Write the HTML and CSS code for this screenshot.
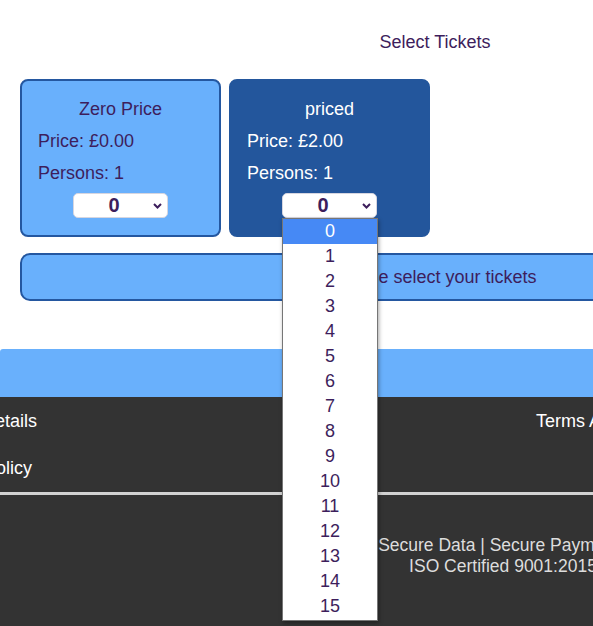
FILE: index.html
```html
<!DOCTYPE html>
<html lang="en">
<head>
<meta charset="utf-8">
<title>Select Tickets</title>
<link rel="stylesheet" href="styles.css">
</head>
<body>
<div class="page">
  <div class="heading">Select Tickets</div>
  <div class="cards">
    <div class="card card-light">
      <div class="card-title">Zero Price</div>
      <div class="card-line">Price: £0.00</div>
      <div class="card-line">Persons: 1</div>
      <div class="select">
        <span class="select-value">0</span>
        <svg class="chev" width="9" height="6" viewBox="0 0 9 6"><polyline points="1,1 4.5,4.5 8,1" fill="none" stroke="#3d1e5c" stroke-width="2"/></svg>
      </div>
    </div>
    <div class="card card-dark">
      <div class="card-title">priced</div>
      <div class="card-line">Price: £2.00</div>
      <div class="card-line">Persons: 1</div>
      <div class="select">
        <span class="select-value">0</span>
        <svg class="chev" width="9" height="6" viewBox="0 0 9 6"><polyline points="1,1 4.5,4.5 8,1" fill="none" stroke="#3d1e5c" stroke-width="2"/></svg>
        <ul class="dropdown">
          <li class="opt opt-active">0</li>
          <li class="opt">1</li>
          <li class="opt">2</li>
          <li class="opt">3</li>
          <li class="opt">4</li>
          <li class="opt">5</li>
          <li class="opt">6</li>
          <li class="opt">7</li>
          <li class="opt">8</li>
          <li class="opt">9</li>
          <li class="opt">10</li>
          <li class="opt">11</li>
          <li class="opt">12</li>
          <li class="opt">13</li>
          <li class="opt">14</li>
          <li class="opt">15</li>
        </ul>
      </div>
    </div>
  </div>
  <div class="message">Please select your tickets</div>
  <div class="band"></div>
  <footer class="footer">
    <div class="links">
      <div class="col col-left">
        <span>Contact Details</span>
        <span>Privacy Policy</span>
      </div>
      <div class="col"></div>
      <div class="col col-right">
        <span>Terms And Conditions</span>
      </div>
    </div>
    <div class="rule"></div>
    <div class="secure">
      <div>Secure Data | Secure Payments</div>
      <div>ISO Certified 9001:2015</div>
    </div>
  </footer>
</div>
</body>
</html>
```

FILE: styles.css
```css
html, body {
  margin: 0;
  padding: 0;
}
body {
  width: 593px;
  height: 626px;
  overflow: hidden;
  background: #ffffff;
  font-family: "Liberation Sans", Arial, sans-serif;
  font-size: 18px;
  color: #3d1e5c;
}
.page {
  width: 870px;
  display: flex;
  flex-direction: column;
}
.heading {
  text-align: center;
  line-height: 21px;
  padding-top: 32px;
}
.cards {
  display: flex;
  gap: 8px;
  padding-left: 20px;
  margin-top: 26px;
}
.card {
  box-sizing: border-box;
  width: 201px;
  height: 158px;
  border: 2px solid #2457a0;
  border-radius: 8px;
  padding-top: 12px;
  display: flex;
  flex-direction: column;
}
.card-light {
  background: #69b0fc;
  color: #3d1e5c;
}
.card-dark {
  background: #23569c;
  border-color: #23569c;
  color: #ffffff;
}
.card-title {
  text-align: center;
  line-height: 32px;
}
.card-line {
  line-height: 32px;
  padding-left: 16px;
}
.select {
  position: relative;
  box-sizing: border-box;
  width: 95px;
  height: 25px;
  margin: 4px auto 0;
  background: #ffffff;
  border: 1px solid #d6d6e0;
  border-radius: 5px;
  display: flex;
  align-items: center;
  color: #3d1e5c;
}
.select-value {
  flex: 1;
  text-align: center;
  font-weight: bold;
  font-size: 20px;
  padding-left: 4px;
}
.chev {
  margin-right: 5px;
  margin-left: 3px;
}
.dropdown {
  position: absolute;
  top: 24px;
  left: -1px;
  width: 96px;
  box-sizing: border-box;
  margin: 0;
  padding: 0;
  list-style: none;
  background: #ffffff;
  border: 1px solid #767676;
  box-shadow: 1px 2px 4px rgba(0, 0, 0, 0.35);
  z-index: 10;
}
.opt {
  height: 25px;
  line-height: 25px;
  text-align: center;
  font-size: 18px;
  color: #3d1e5c;
}
.opt:last-child {
  height: 26px;
}
.opt-active {
  background: #4689f5;
  color: #ffffff;
}
.message {
  box-sizing: border-box;
  margin: 16px 20px 0;
  height: 48px;
  line-height: 44px;
  text-align: center;
  background: #69b0fc;
  border: 2px solid #2457a0;
  border-radius: 10px;
}
.band {
  margin-top: 48px;
  height: 48px;
  background: #69b0fc;
  border-top-left-radius: 3px;
}
.footer {
  margin-left: -130px;
  width: 1130px;
  height: 240px;
  background: #333333;
  color: #ffffff;
}
.links {
  display: grid;
  grid-template-columns: 212px 454px 1fr;
  padding-top: 14px;
}
.col {
  display: flex;
  flex-direction: column;
  gap: 26px;
  line-height: 21px;
}
.col-left {
  align-items: center;
}
.rule {
  margin-top: 13px;
  height: 3px;
  background: #d2d2d2;
}
.secure {
  margin-top: 40px;
  margin-left: 397px;
  width: 472px;
  text-align: center;
  line-height: 21px;
  font-size: 17.5px;
  color: #dddddd;
}
```
